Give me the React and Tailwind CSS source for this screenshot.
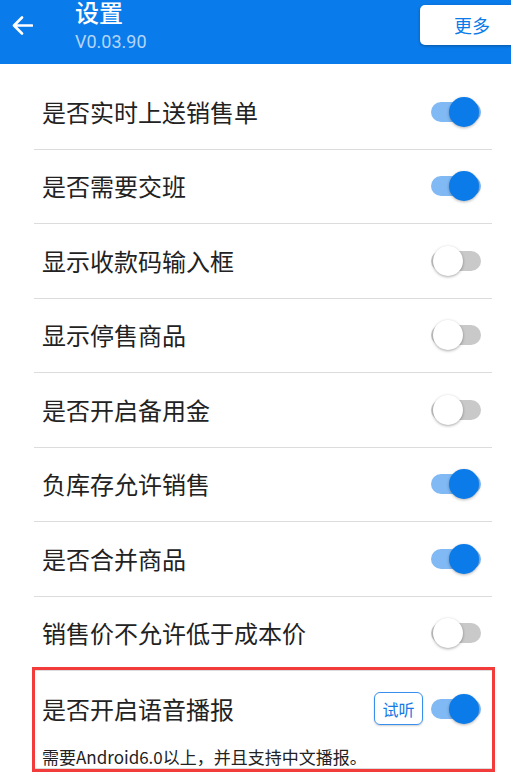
import React from "react";

const rows = [
  { label: "是否实时上送销售单", on: true },
  { label: "是否需要交班", on: true },
  { label: "显示收款码输入框", on: false },
  { label: "显示停售商品", on: false },
  { label: "是否开启备用金", on: false },
  { label: "负库存允许销售", on: true },
  { label: "是否合并商品", on: true },
  { label: "销售价不允许低于成本价", on: false },
];

function Toggle({ on }) {
  return (
    <div className="relative w-[50px] h-[30px] shrink-0">
      <div
        className={
          on
            ? "absolute left-0 right-0 top-[5px] h-[20px] rounded-full bg-[#80b9f4]"
            : "absolute left-0 right-0 top-[5px] h-[20px] rounded-full bg-[#c9c9c9]"
        }
      />
      <div
        className={
          on
            ? "absolute top-0 left-[18px] w-[30px] h-[30px] rounded-full bg-[#0b7be9] shadow-[0_1px_3px_rgba(0,0,0,0.3)]"
            : "absolute top-0 left-[2px] w-[30px] h-[30px] rounded-full bg-white shadow-[0_1px_3px_rgba(0,0,0,0.35)]"
        }
      />
    </div>
  );
}

export default function App() {
  return (
    <div
      className="w-[511px] h-[779px] overflow-hidden bg-white relative"
      style={{ fontFamily: '"Noto Sans CJK SC", "Noto Sans", sans-serif' }}
    >
      <div className="h-16 bg-[#0a7bea] flex items-start">
        <div className="w-[75px] h-full flex items-center pl-[12px] pb-[14px]">
          <svg width="21" height="19" viewBox="0 0 21 19" fill="none">
            <path d="M20 9.5H2.5M10 1.5L2 9.5L10 17.5" stroke="white" strokeWidth="2.6" strokeLinecap="round" strokeLinejoin="round" />
          </svg>
        </div>
        <div className="flex flex-col">
          <div className="text-[24px] leading-[24px] text-white font-medium">设置</div>
          <div
            className="mt-[6px] text-[18px] leading-[24px] text-[#b3d5f9]"
            style={{ fontFamily: 'Roboto, "Noto Sans", sans-serif' }}
          >
            V0.03.90
          </div>
        </div>
        <div className="ml-auto mt-[5px] mr-[-13px] w-[104px] h-[40px] rounded-[5px] bg-white shadow-[0_1px_3px_rgba(0,0,0,0.3)] flex items-center justify-center text-[18px] text-[#0b7be9]">
          更多
        </div>
      </div>

      <div className="pt-[11px] ml-[34px] mr-[19px]">
        {rows.map((r) => (
          <div
            key={r.label}
            className="h-[74.5px] border-b border-[#dcdcdc] flex items-center pl-[8px] pr-[11px]"
          >
            <div className="text-[24px] text-[#222222] leading-none">{r.label}</div>
            <div className="ml-auto">
              <Toggle on={r.on} />
            </div>
          </div>
        ))}
        <div className="relative">
          <div className="h-[75px] flex items-center pl-[8px] pr-[11px]">
            <div className="text-[24px] text-[#222222] leading-none">是否开启语音播报</div>
            <div className="ml-auto flex items-center gap-[8px]">
              <div className="w-[49px] h-[33px] rounded-[6px] border-[1.5px] border-[#3a8fec] shadow-[0_1px_2px_rgba(0,0,0,0.2)] flex items-center justify-center text-[16px] text-[#1478e6]">
                试听
              </div>
              <Toggle on={true} />
            </div>
          </div>
          <div className="h-[23px] border-b border-[#dcdcdc] pl-[8px] text-[17px] leading-[22px] text-[#222222] whitespace-nowrap">
            需要Android6.0以上，并且支持中文播报。
          </div>
          <div className="absolute top-[-4px] left-[-2px] right-[-3px] bottom-[-3px] border-[3px] border-[#f23b3b] pointer-events-none" />
        </div>
      </div>
    </div>
  );
}
